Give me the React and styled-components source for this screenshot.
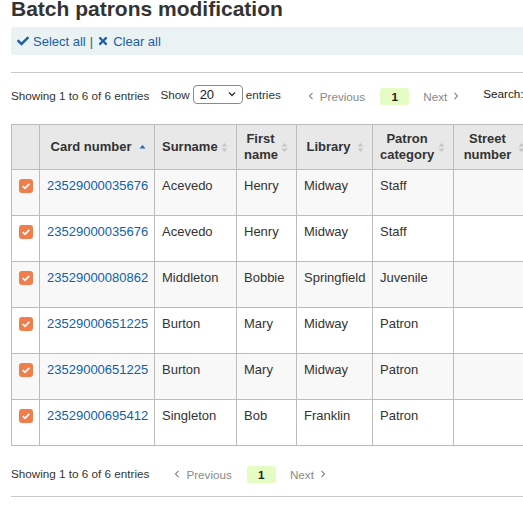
import React from 'react';
import styled, { createGlobalStyle } from 'styled-components';
import { FaCheck, FaTimes } from 'react-icons/fa';

const GlobalStyle = createGlobalStyle`
  html, body {
    margin: 0;
    padding: 0;
    overflow: hidden;
    background: #fff;
  }
  body {
    font-family: "Liberation Sans", Arial, sans-serif;
    font-size: 13px;
    color: #333;
  }
`;

export const Page = styled.div`
  width: 700px;
  padding-left: 11px;
`;

export const Title = styled.h1`
  margin: -3px 0 0;
  font-size: 21px;
  line-height: 24px;
  font-weight: bold;
  color: #333;
`;

export const Toolbar = styled.div`
  margin-top: 6px;
  height: 28px;
  display: flex;
  align-items: center;
  padding-left: 6px;
  background: #eaf2f4;
  border-radius: 3px 0 0 3px;
  color: #1a5ea8;
`;

export const ToolLink = styled.a`
  display: inline-flex;
  align-items: center;
  gap: 4px;
  color: #1a5ea8;
  text-decoration: none;
  cursor: pointer;
  svg {
    width: 12px;
    height: 12px;
  }
`;

export const Sep = styled.span`
  margin: 0 4px;
  color: #555;
`;

export const Rule = styled.div`
  margin-top: ${(p) => p.$top}px;
  border-top: 1px solid #c8c8c8;
`;

export const InfoRow = styled.div`
  display: flex;
  align-items: flex-start;
  height: 20px;
  margin-top: ${(p) => p.$top}px;
  font-size: 11.7px;
  white-space: nowrap;
`;

export const Info = styled.div`
  line-height: 20px;
  padding-top: 2px;
`;

export const Length = styled.label`
  display: flex;
  align-items: center;
  gap: 3px;
  margin-left: 11px;
  height: 20px;
`;

export const Select = styled.div`
  box-sizing: border-box;
  width: 50px;
  height: 19px;
  border: 1px solid #8a8a8a;
  border-radius: 4px;
  display: flex;
  align-items: center;
  justify-content: space-between;
  padding: 0 6px 0 6px;
  font-size: 13px;
  color: #222;
  svg {
    width: 8px;
    height: 8px;
  }
`;

export const Paginate = styled.div`
  display: flex;
  align-items: center;
  height: 20px;
  margin-left: ${(p) => p.$gap}px;
  padding-top: 2px;
`;

export const PageLink = styled.span`
  display: inline-flex;
  align-items: center;
  gap: 6px;
  color: #8a8a8a;
  svg {
    width: 6px;
    height: 8px;
  }
`;

export const Current = styled.span`
  display: inline-flex;
  align-items: center;
  justify-content: center;
  width: 29px;
  height: 17px;
  margin: 0 14px 0 15px;
  background: #e6fcc5;
  border-radius: 3px;
  font-weight: bold;
  color: #222;
`;

export const Search = styled.div`
  margin-left: 24px;
  line-height: 20px;
  color: #222;
`;

export const Table = styled.table`
  width: ${(p) => p.$width}px;
  margin-top: 20px;
  border-collapse: collapse;
  table-layout: fixed;
  border: 1px solid #bcbcbc;
`;

export const Th = styled.th`
  position: relative;
  height: 45px;
  box-sizing: border-box;
  padding: 0 19px 0 7px;
  background: #e8e8e8;
  border: 1px solid #bcbcbc;
  font-weight: bold;
  font-size: 13px;
  line-height: 16px;
  text-align: center;
  color: #333;
`;

export const SortIcon = styled.svg`
  position: absolute;
  right: 8px;
  top: 50%;
  width: 7px;
  height: 11px;
  margin-top: -5px;
`;

export const Tr = styled.tr`
  background: ${(p) => (p.$odd ? '#f8f8f8' : '#fff')};
`;

export const Td = styled.td`
  height: 46px;
  box-sizing: border-box;
  padding: 7px 7px 0;
  border: 1px solid #bcbcbc;
  vertical-align: top;
  line-height: 17px;
  color: #333;
  white-space: nowrap;
`;

export const CardLink = styled.a`
  color: #0f5fae;
  text-decoration: none;
`;

export const Check = styled.span`
  display: flex;
  align-items: center;
  justify-content: center;
  width: 14px;
  height: 14px;
  margin-top: 2px;
  border-radius: 3px;
  background: #f07d4c;
  svg {
    width: 10px;
    height: 10px;
  }
`;

const Sort = ({ active }) => (
  <SortIcon viewBox="0 0 7 11">
    {active ? (
      <path d="M0.5 6.5 L3.5 3 L6.5 6.5 Z" fill="#1c6cbf" />
    ) : (
      <>
        <path d="M0.5 4.5 L3.5 1 L6.5 4.5 Z" fill="#c6c6c6" />
        <path d="M0.5 6.5 L3.5 10 L6.5 6.5 Z" fill="#c6c6c6" />
      </>
    )}
  </SortIcon>
);

const ChevLeft = () => (
  <svg viewBox="0 0 6 8">
    <path d="M4.5 0.8 L1.5 4 L4.5 7.2" fill="none" stroke="#8a8a8a" strokeWidth="1.2" />
  </svg>
);

const ChevRight = () => (
  <svg viewBox="0 0 6 8">
    <path d="M1.5 0.8 L4.5 4 L1.5 7.2" fill="none" stroke="#8a8a8a" strokeWidth="1.2" />
  </svg>
);

const columns = [
  { key: 'check', label: '', width: 28 },
  { key: 'card', label: 'Card number', width: 115, active: true },
  { key: 'surname', label: 'Surname', width: 82 },
  { key: 'first', label: ['First', 'name'], width: 60 },
  { key: 'library', label: 'Library', width: 76 },
  { key: 'category', label: ['Patron', 'category'], width: 81 },
  { key: 'street', label: ['Street', 'number'], width: 80 },
  { key: 'address', label: 'Address', width: 90 },
];

const tableWidth = columns.reduce((sum, c) => sum + c.width, 0);

const patrons = [
  ['23529000035676', 'Acevedo', 'Henry', 'Midway', 'Staff'],
  ['23529000035676', 'Acevedo', 'Henry', 'Midway', 'Staff'],
  ['23529000080862', 'Middleton', 'Bobbie', 'Springfield', 'Juvenile'],
  ['23529000651225', 'Burton', 'Mary', 'Midway', 'Patron'],
  ['23529000651225', 'Burton', 'Mary', 'Midway', 'Patron'],
  ['23529000695412', 'Singleton', 'Bob', 'Franklin', 'Patron'],
];

const Pagination = () => (
  <>
    <PageLink>
      <ChevLeft />
      Previous
    </PageLink>
    <Current>1</Current>
    <PageLink>
      Next
      <ChevRight />
    </PageLink>
  </>
);

class App extends React.PureComponent {
  render() {
    return (
      <Page>
        <GlobalStyle />
        <Title>Batch patrons modification</Title>
        <Toolbar>
          <ToolLink>
            <FaCheck />
            Select all
          </ToolLink>
          <Sep>|</Sep>
          <ToolLink>
            <FaTimes />
            Clear all
          </ToolLink>
        </Toolbar>
        <Rule $top={17} />

        <InfoRow $top={11}>
          <Info>Showing 1 to 6 of 6 entries</Info>
          <Length>
            Show
            <Select>
              20
              <svg viewBox="0 0 8 8">
                <path d="M1 2.5 L4 5.5 L7 2.5" fill="none" stroke="#333" strokeWidth="1.3" />
              </svg>
            </Select>
            entries
          </Length>
          <Paginate $gap={27}>
            <Pagination />
          </Paginate>
          <Search>Search:</Search>
        </InfoRow>

        <Table $width={tableWidth}>
          <colgroup>
            {columns.map((c) => (
              <col key={c.key} style={{ width: c.width }} />
            ))}
          </colgroup>
          <thead>
            <tr>
              {columns.map((c) => (
                <Th key={c.key}>
                  {Array.isArray(c.label) ? (
                    <>
                      {c.label[0]}
                      <br />
                      {c.label[1]}
                    </>
                  ) : (
                    c.label
                  )}
                  {c.key !== 'check' && <Sort active={c.active} />}
                </Th>
              ))}
            </tr>
          </thead>
          <tbody>
            {patrons.map((p, i) => (
              <Tr key={i} $odd={i % 2 === 0}>
                <Td>
                  <Check>
                    <svg viewBox="0 0 10 10">
                      <path d="M1.8 5.2 L4 7.3 L8.3 2.8" fill="none" stroke="#fff" strokeWidth="1.8" />
                    </svg>
                  </Check>
                </Td>
                <Td>
                  <CardLink>{p[0]}</CardLink>
                </Td>
                <Td>{p[1]}</Td>
                <Td>{p[2]}</Td>
                <Td>{p[3]}</Td>
                <Td>{p[4]}</Td>
                <Td />
                <Td />
              </Tr>
            ))}
          </tbody>
        </Table>

        <InfoRow $top={16}>
          <Info>Showing 1 to 6 of 6 entries</Info>
          <Paginate $gap={25}>
            <Pagination />
          </Paginate>
        </InfoRow>
        <Rule $top={14} />
      </Page>
    );
  }
}

export default App;
